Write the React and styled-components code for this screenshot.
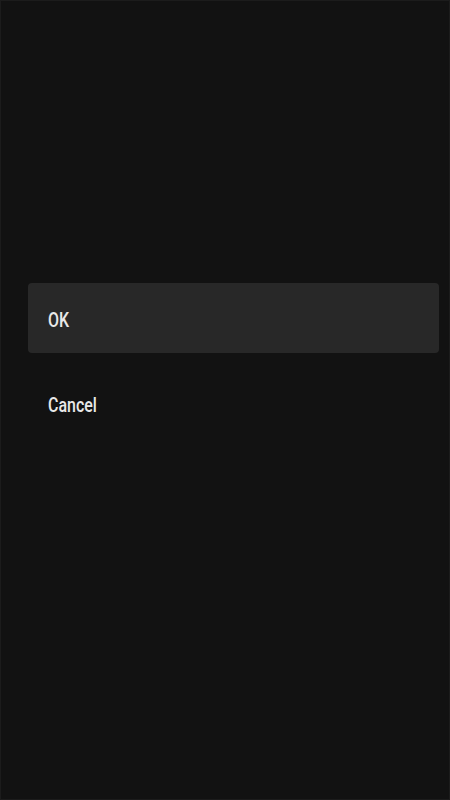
import React from "react";
import styled, { createGlobalStyle } from "styled-components";

const GlobalStyle = createGlobalStyle`
  html, body {
    margin: 0;
    padding: 0;
    background: #121212;
  }
  body {
    font-family: Roboto, "Liberation Sans", sans-serif;
  }
`;

const Screen = styled.div`
  box-sizing: border-box;
  width: 450px;
  height: 800px;
  background: #121212;
  border: 1px solid #1c1c1c;
  padding: 282px 10px 0 27px;
`;

const Options = styled.ul`
  list-style: none;
  margin: 0;
  padding: 0;
  display: flex;
  flex-direction: column;
  gap: 15px;
`;

const Option = styled.li`
  box-sizing: border-box;
  height: 70px;
  display: flex;
  align-items: center;
  padding: 3px 0 0 20px;
  border-radius: 4px;
  background: ${(p) => (p.$focused ? "#282828" : "transparent")};
`;

const Label = styled.span`
  display: inline-block;
  font-size: 21px;
  font-weight: 500;
  color: #e8e8e8;
  transform: scaleX(0.76);
  transform-origin: left center;
`;

export default function App() {
  const items = ["OK", "Cancel"];
  return (
    <>
      <GlobalStyle />
      <Screen>
        <Options>
          {items.map((item, i) => (
            <Option key={item} $focused={i === 0}>
              <Label>{item}</Label>
            </Option>
          ))}
        </Options>
      </Screen>
    </>
  );
}
